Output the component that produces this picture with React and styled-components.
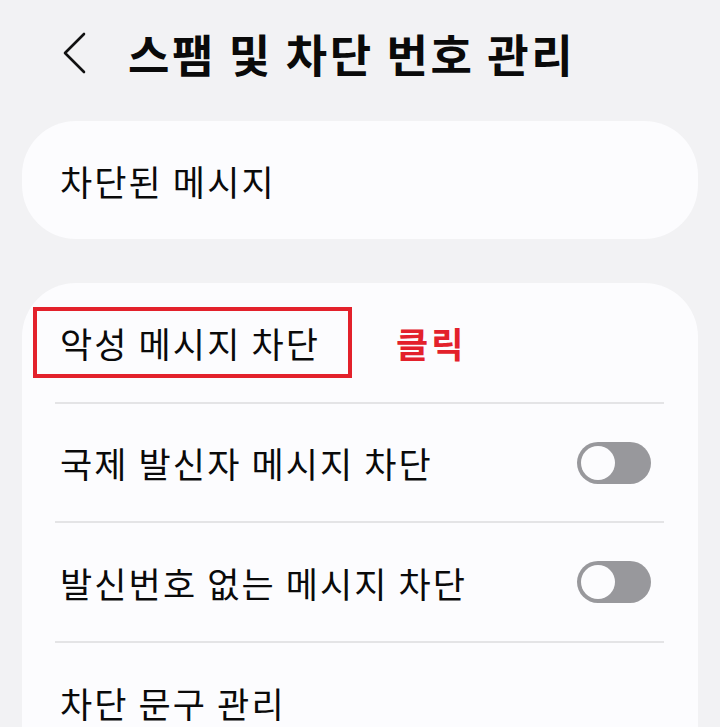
import React from 'react';
import styled, {createGlobalStyle} from 'styled-components';

const GlobalStyle=createGlobalStyle`
  html,body{
    margin:0;
    padding:0;
    background:#f2f2f4;
  }
  body{
    font-family:"Noto Sans CJK KR","Noto Sans",sans-serif;
    color:#0a0a0a;
    overflow:hidden;
  }
`;

const Page=styled.div`
  width:720px;
  height:727px;
  overflow:hidden;
`;

const Header=styled.header`
  height:121px;
  display:flex;
  align-items:center;
  padding:0 0 15px 58px;
  box-sizing:border-box;
  gap:36px;
`;

const Back=styled.button`
  border:none;
  background:none;
  padding:0;
  width:34px;
  height:44px;
  display:flex;
  align-items:center;
  justify-content:center;
`;

const Title=styled.h1`
  margin:0;
  font-size:45px;
  font-weight:700;
  letter-spacing:2.6px;
  line-height:1;
`;

const Card=styled.section`
  margin:0 22px;
  background:#fcfcfe;
  border-radius:${p=>p.open?'54px 54px 0 0':'54px'};
  margin-bottom:${p=>p.gap||0}px;
`;

const Row=styled.div`
  height:${p=>p.h||118}px;
  display:flex;
  align-items:center;
  justify-content:space-between;
  padding:0 47px 0 38px;
  box-sizing:border-box;
`;

const MarkedRow=styled.div`
  height:119px;
  display:flex;
  align-items:center;
  padding-left:11px;
  gap:44px;
`;

const Label=styled.span`
  font-size:35px;
  font-weight:400;
  letter-spacing:2.1px;
  line-height:1;
`;

const Marked=styled.span`
  height:71px;
  box-sizing:border-box;
  border:4px solid #e3212b;
  display:flex;
  align-items:center;
  padding:0 28px 0 23px;
`;

const Note=styled.span`
  color:#e3212b;
  font-size:35px;
  font-weight:700;
  letter-spacing:3px;
  line-height:1;
`;

const Divider=styled.div`
  height:2px;
  background:#e4e4e6;
  margin:0 34px 0 33px;
`;

const Toggle=styled.span`
  width:74px;
  height:42px;
  border-radius:21px;
  background:#98989c;
  display:flex;
  align-items:center;
  padding:0 4px;
  box-sizing:border-box;
  &::before{
    content:'';
    width:34px;
    height:34px;
    border-radius:50%;
    background:#fcfcfe;
  }
`;

export default function App(){
  return (
    <Page>
      <GlobalStyle/>
      <Header>
        <Back aria-label="뒤로">
          <svg width="26" height="42" viewBox="0 0 26 42">
            <polyline points="22,2 3,21 22,40" fill="none" stroke="#111" strokeWidth="2.6" strokeLinecap="round" strokeLinejoin="round"/>
          </svg>
        </Back>
        <Title>스팸 및 차단 번호 관리</Title>
      </Header>

      <Card gap={44}>
        <Row>
          <Label>차단된 메시지</Label>
        </Row>
      </Card>

      <Card open>
        <MarkedRow>
          <Marked><Label>악성 메시지 차단</Label></Marked>
          <Note>클릭</Note>
        </MarkedRow>
        <Divider/>
        <Row h={117}>
          <Label>국제 발신자 메시지 차단</Label>
          <Toggle/>
        </Row>
        <Divider/>
        <Row h={118}>
          <Label>발신번호 없는 메시지 차단</Label>
          <Toggle/>
        </Row>
        <Divider/>
        <Row h={118}>
          <Label>차단 문구 관리</Label>
        </Row>
      </Card>
    </Page>
  );
}
